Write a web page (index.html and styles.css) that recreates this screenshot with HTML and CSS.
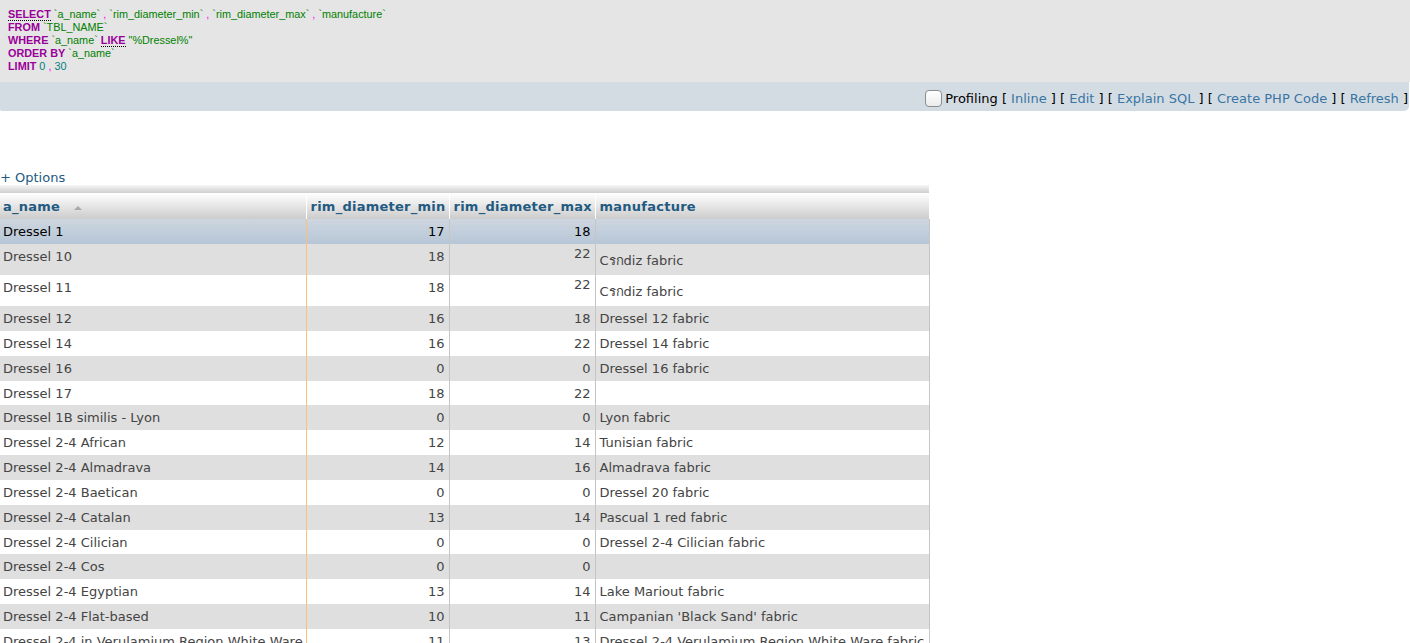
FILE: index.html
```html
<!DOCTYPE html>
<html>
<head>
<meta charset="utf-8">
<title>SQL result</title>
<link rel="stylesheet" href="styles.css">
</head>
<body>
<div class="sqlbox">
  <div class="ln"><a class="kw doc">SELECT</a> <span class="bt">`a_name`</span> <span class="p">,</span> <span class="bt">`rim_diameter_min`</span> <span class="p">,</span> <span class="bt">`rim_diameter_max`</span> <span class="p">,</span> <span class="bt">`manufacture`</span></div>
  <div class="ln"><span class="kw">FROM</span> <span class="bt">`TBL_NAME`</span></div>
  <div class="ln"><span class="kw">WHERE</span> <span class="bt">`a_name`</span> <a class="kw doc">LIKE</a> <span class="str">"%Dressel%"</span></div>
  <div class="ln"><span class="kw">ORDER BY</span> <span class="bt">`a_name`</span></div>
  <div class="ln"><span class="kw">LIMIT</span> <span class="num">0</span> <span class="p">,</span> <span class="num">30</span></div>
</div>
<div class="toolbar">
  <span class="check"></span>
  <span class="tb-text">Profiling [ <a class="lnk">Inline</a> ] [ <a class="lnk">Edit</a> ] [ <a class="lnk">Explain SQL</a> ] [ <a class="lnk">Create PHP Code</a> ] [ <a class="lnk">Refresh</a> ]</span>
</div>
<div class="options"><a class="lnk">+ Options</a></div>
<div class="strip"></div>
<table class="data">
  <colgroup>
    <col class="c1"><col class="c2"><col class="c3"><col class="c4">
  </colgroup>
  <thead>
    <tr>
      <th class="cond">a_name <span class="sort"></span></th>
      <th>rim_diameter_min</th>
      <th>rim_diameter_max</th>
      <th>manufacture</th>
    </tr>
  </thead>
  <tbody>
    <tr class="marked"><td class="cond">Dressel 1</td><td class="r">17</td><td class="r">18</td><td></td></tr>
    <tr class="odd tall"><td class="cond">Dressel 10</td><td class="r">18</td><td class="r up">22</td><td class="low">Cรกdiz fabric</td></tr>
    <tr class="even tall"><td class="cond">Dressel 11</td><td class="r">18</td><td class="r up">22</td><td class="low">Cรกdiz fabric</td></tr>
    <tr class="odd"><td class="cond">Dressel 12</td><td class="r">16</td><td class="r">18</td><td>Dressel 12 fabric</td></tr>
    <tr class="even"><td class="cond">Dressel 14</td><td class="r">16</td><td class="r">22</td><td>Dressel 14 fabric</td></tr>
    <tr class="odd"><td class="cond">Dressel 16</td><td class="r">0</td><td class="r">0</td><td>Dressel 16 fabric</td></tr>
    <tr class="even"><td class="cond">Dressel 17</td><td class="r">18</td><td class="r">22</td><td></td></tr>
    <tr class="odd"><td class="cond">Dressel 1B similis - Lyon</td><td class="r">0</td><td class="r">0</td><td>Lyon fabric</td></tr>
    <tr class="even"><td class="cond">Dressel 2-4 African</td><td class="r">12</td><td class="r">14</td><td>Tunisian fabric</td></tr>
    <tr class="odd"><td class="cond">Dressel 2-4 Almadrava</td><td class="r">14</td><td class="r">16</td><td>Almadrava fabric</td></tr>
    <tr class="even"><td class="cond">Dressel 2-4 Baetican</td><td class="r">0</td><td class="r">0</td><td>Dressel 20 fabric</td></tr>
    <tr class="odd"><td class="cond">Dressel 2-4 Catalan</td><td class="r">13</td><td class="r">14</td><td>Pascual 1 red fabric</td></tr>
    <tr class="even"><td class="cond">Dressel 2-4 Cilician</td><td class="r">0</td><td class="r">0</td><td>Dressel 2-4 Cilician fabric</td></tr>
    <tr class="odd"><td class="cond">Dressel 2-4 Cos</td><td class="r">0</td><td class="r">0</td><td></td></tr>
    <tr class="even"><td class="cond">Dressel 2-4 Egyptian</td><td class="r">13</td><td class="r">14</td><td>Lake Mariout fabric</td></tr>
    <tr class="odd"><td class="cond">Dressel 2-4 Flat-based</td><td class="r">10</td><td class="r">11</td><td>Campanian 'Black Sand' fabric</td></tr>
    <tr class="even"><td class="cond">Dressel 2-4 in Verulamium Region White Ware</td><td class="r">11</td><td class="r">13</td><td>Dressel 2-4 Verulamium Region White Ware fabric</td></tr>
  </tbody>
</table>
</body>
</html>
```

FILE: styles.css
```css
html, body {
  margin: 0;
  padding: 0;
  background: #fff;
}
body {
  font-family: "DejaVu Sans", sans-serif;
  font-size: 13px;
  color: #444;
  overflow: hidden;
}
.sqlbox {
  background: #e5e5e5;
  height: 82px;
  box-sizing: border-box;
  padding: 8px 8px 0 8px;
  font-family: "Liberation Sans", Arial, sans-serif;
  font-size: 10.85px;
  line-height: 13px;
  white-space: nowrap;
}
.ln { height: 13px; }
.kw { color: #990099; font-weight: bold; }
.doc { border-bottom: 1px dotted #000; }
.bt { color: #008000; }
.str { color: #008000; }
.p { color: #ff00ff; }
.num { color: #008080; }
.toolbar {
  background: #d3dce3;
  height: 29px;
  box-sizing: border-box;
  margin-right: 1px;
  border-radius: 0 0 5px 2px;
  display: flex;
  justify-content: flex-end;
  align-items: center;
  padding: 4px 1px 0 0;
  color: #000;
  line-height: 15px;
}
.check {
  width: 15px;
  height: 15px;
  border: 1px solid #8d8d8d;
  border-radius: 4px;
  background: linear-gradient(#fff, #ececec);
  margin-right: 3px;
  box-sizing: content-box;
}
.lnk { color: #235a81; text-decoration: none; }
.tb-text .lnk { color: #3a75a3; }
.options {
  margin-top: 59px;
  height: 15px;
  line-height: 15px;
  color: #235a81;
}
.options .lnk { color: #235a81; }
.strip {
  width: 929px;
  height: 8px;
  background: linear-gradient(#f6f6f6, #cfcfcf);
}
table.data {
  border-collapse: collapse;
  table-layout: fixed;
  width: 929px;
}
col.c1 { width: 306px; }
col.c2 { width: 143px; }
col.c3 { width: 146px; }
col.c4 { width: 334px; }
th {
  height: 26px;
  box-sizing: border-box;
  padding: 0 3px 0 4px;
  text-align: left;
  font-weight: bold;
  letter-spacing: 0.25px;
  color: #235a81;
  background: linear-gradient(#ffffff, #cccccc);
  border-right: 1px solid #fff;
  line-height: 15px;
  white-space: nowrap;
}
th.cond { padding-left: 3px; }
th:last-child { border-right: 0; }
.sort {
  display: inline-block;
  width: 0;
  height: 0;
  border-left: 4px solid transparent;
  border-right: 4px solid transparent;
  border-bottom: 4px solid #a9a9a9;
  margin-left: 9px;
  vertical-align: 1px;
}
td {
  padding: 5px 4px 4.85px 4px;
  line-height: 15px;
  vertical-align: top;
  white-space: nowrap;
  overflow: hidden;
  border-right: 1px solid #c5c5c5;
}
td.cond { border-right: 1px solid #ffbf77; padding-left: 3px; }
td.r { text-align: right; }
tr.odd td { background: #dfdfdf; }
tr.even td { background: #fff; }
tr.marked td {
  background: linear-gradient(#ced6df, #b6c6d7);
  color: #000;
  padding-top: 5px;
  padding-bottom: 5px;
}
tr.tall td { padding-top: 5px; padding-bottom: 11px; }
tr.tall td.up { padding-top: 2px; padding-bottom: 14px; }
tr.tall td.low { padding-top: 9px; padding-bottom: 7px; }
```
